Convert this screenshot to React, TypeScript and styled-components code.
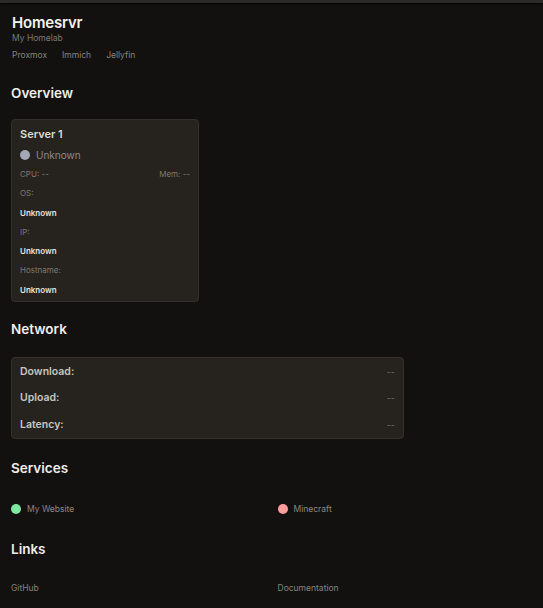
import React from "react";
import styled, { createGlobalStyle } from "styled-components";

const GlobalStyle = createGlobalStyle`
  html, body {
    margin: 0;
    padding: 0;
    background: #121110;
  }
  body {
    font-family: Inter, "Noto Sans", "Liberation Sans", sans-serif;
    color: #ece9e4;
  }
`;

const TopBar = styled.div`
  height: 3px;
  background: #2b2a29;
  box-shadow: 0 1px 2px rgba(0, 0, 0, 0.9);
`;

const Page = styled.main`
  padding: 10px 11px 12px;
`;

const Header = styled.header`
  display: flex;
  flex-direction: column;
  padding-left: 1px;
`;

const Title = styled.h1`
  margin: 0;
  font-size: 15px;
  font-weight: 600;
  line-height: 20px;
  letter-spacing: -0.2px;
  color: #f3f1ee;
`;

const Subtitle = styled.div`
  font-size: 8.5px;
  color: #7d7a75;
  line-height: 11px;
`;

const NavLinks = styled.nav`
  display: flex;
  gap: 15px;
  margin-top: 6px;
`;

const NavLink = styled.a`
  font-size: 8.5px;
  color: #86837e;
  text-decoration: none;
  line-height: 11px;
`;

const SectionTitle = styled.h2`
  margin: 0;
  font-size: 13.5px;
  font-weight: 600;
  line-height: 20px;
  color: #f0ede9;
`;

const Section = styled.section<{ top: number; gap: number }>`
  margin-top: ${({ top }) => top}px;
  display: flex;
  flex-direction: column;
  gap: ${({ gap }) => gap}px;
`;

const Card = styled.div<{ width: number }>`
  width: ${({ width }) => width}px;
  box-sizing: border-box;
  background: #26231f;
  border: 1px solid #34312c;
  border-radius: 4px;
`;

const ServerCard = styled(Card)`
  padding: 7px 8px 1px;
  display: flex;
  flex-direction: column;
`;

const ServerName = styled.div`
  font-size: 11px;
  font-weight: 600;
  color: #dedbd6;
  line-height: 15px;
`;

const StatusRow = styled.div`
  display: flex;
  align-items: center;
  gap: 6px;
  margin-top: 7px;
  height: 12px;
`;

const Dot = styled.span<{ color: string }>`
  width: 10px;
  height: 10px;
  border-radius: 50%;
  background: ${({ color }) => color};
  flex-shrink: 0;
`;

const StatusText = styled.span`
  font-size: 10px;
  color: #8c8984;
`;

const SplitRow = styled.div`
  display: flex;
  justify-content: space-between;
  margin-top: 4px;
`;

const Label = styled.div`
  font-size: 8px;
  color: #7c7974;
  line-height: 19.3px;
  height: 19.3px;
`;

const Value = styled.div`
  font-size: 8px;
  font-weight: 600;
  color: #e6e3de;
  line-height: 19.3px;
  height: 19.3px;
`;

const NetCard = styled(Card)`
  padding: 0 8px;
  display: flex;
  flex-direction: column;
`;

const NetRow = styled.div`
  display: flex;
  justify-content: space-between;
  align-items: center;
  height: 26.5px;
`;

const NetLabel = styled.span`
  font-size: 10.5px;
  font-weight: 600;
  color: #c9c6c1;
`;

const NetValue = styled.span`
  font-size: 9px;
  color: #6f6c67;
`;

const Grid = styled.div`
  display: grid;
  grid-template-columns: 1fr 1fr;
  column-gap: 12px;
`;

const ServiceItem = styled.div`
  display: flex;
  align-items: center;
  gap: 6px;
  height: 20px;
`;

const ServiceName = styled.span`
  font-size: 8.5px;
  color: #8a8782;
`;

const LinkItem = styled.a`
  font-size: 8.5px;
  color: #86837e;
  text-decoration: none;
  line-height: 20px;
`;

const servers = [
  { label: "OS:", value: "Unknown" },
  { label: "IP:", value: "Unknown" },
  { label: "Hostname:", value: "Unknown" },
];

const network = ["Download:", "Upload:", "Latency:"];

const services = [
  { name: "My Website", color: "#7ee8a1" },
  { name: "Minecraft", color: "#ff9d9d" },
];

const links = ["GitHub", "Documentation"];

const App: React.FC = () => {
  return (
    <>
      <GlobalStyle />
      <TopBar />
      <Page>
        <Header>
          <Title>Homesrvr</Title>
          <Subtitle>My Homelab</Subtitle>
          <NavLinks>
            <NavLink href="#">Proxmox</NavLink>
            <NavLink href="#">Immich</NavLink>
            <NavLink href="#">Jellyfin</NavLink>
          </NavLinks>
        </Header>

        <Section top={22} gap={16}>
          <SectionTitle>Overview</SectionTitle>
          <ServerCard width={188}>
            <ServerName>Server 1</ServerName>
            <StatusRow>
              <Dot color="#a3a7b6" />
              <StatusText>Unknown</StatusText>
            </StatusRow>
            <SplitRow>
              <Label>CPU: --</Label>
              <Label>Mem: --</Label>
            </SplitRow>
            {servers.map((s) => (
              <React.Fragment key={s.label}>
                <Label>{s.label}</Label>
                <Value>{s.value}</Value>
              </React.Fragment>
            ))}
          </ServerCard>
        </Section>

        <Section top={17} gap={18}>
          <SectionTitle>Network</SectionTitle>
          <NetCard width={393}>
            {network.map((n) => (
              <NetRow key={n}>
                <NetLabel>{n}</NetLabel>
                <NetValue>--</NetValue>
              </NetRow>
            ))}
          </NetCard>
        </Section>

        <Section top={19} gap={21}>
          <SectionTitle>Services</SectionTitle>
          <Grid>
            {services.map((s) => (
              <ServiceItem key={s.name}>
                <Dot color={s.color} />
                <ServiceName>{s.name}</ServiceName>
              </ServiceItem>
            ))}
          </Grid>
        </Section>

        <Section top={20} gap={19}>
          <SectionTitle>Links</SectionTitle>
          <Grid>
            {links.map((l) => (
              <LinkItem key={l} href="#">
                {l}
              </LinkItem>
            ))}
          </Grid>
        </Section>
      </Page>
    </>
  );
};

export default App;
